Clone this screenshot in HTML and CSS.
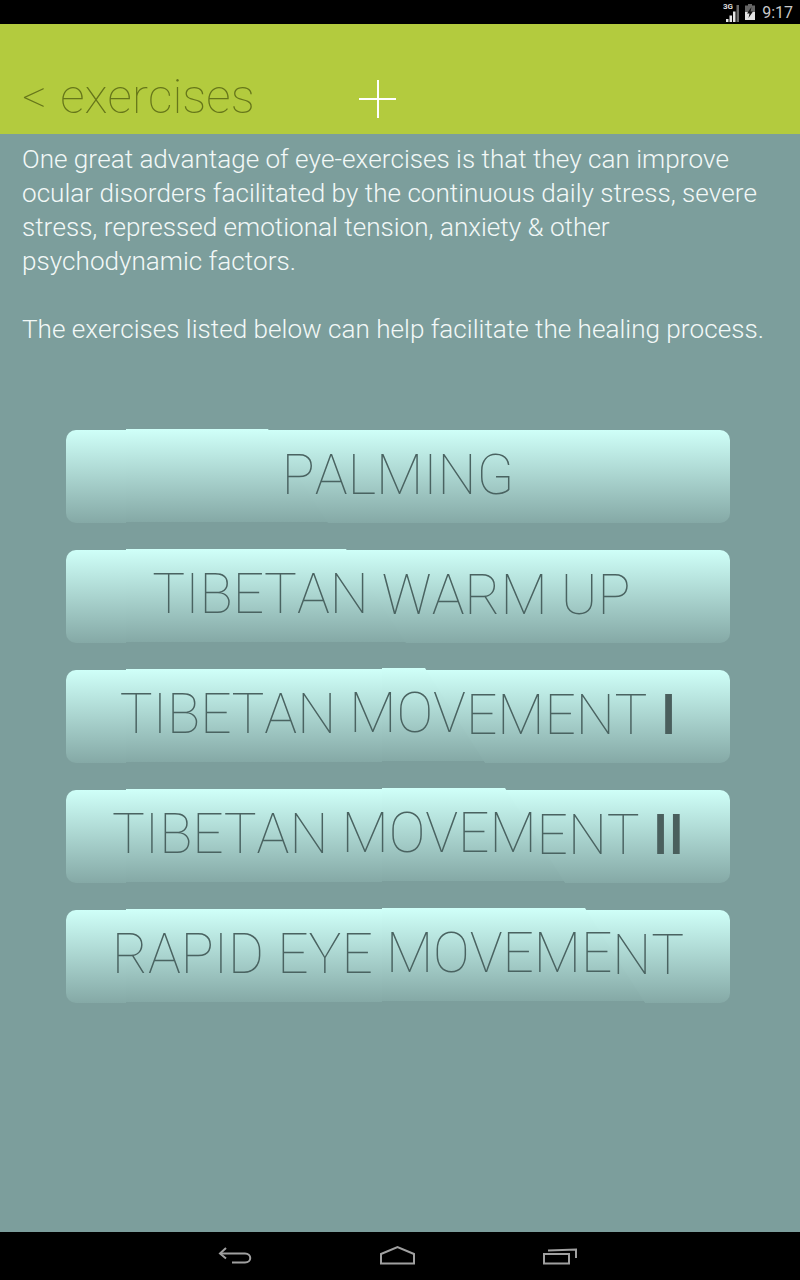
FILE: index.html
```html
<!DOCTYPE html>
<html lang="en">

<head>
    <meta charset="UTF-8">
    <meta name="viewport" content="width=device-width, initial-scale=1.0">
    <title>Exercises</title>
    <link rel="stylesheet" href="styles.css">
</head>

<body>
    <div id="status-bar">
        <svg class="signal" width="20" height="20" viewBox="0 0 20 20">
            <text x="3" y="7" class="signal-label">3G</text>
            <path d="M6 20h2.500v-3H6zM9.500 20H12v-6.500H9.500zM13 20h2.500V9.500H13z" fill="#e4e4e4" />
            <path d="M16.500 20H19V3h-2.500z" fill="#6a6a6a" />
        </svg>
        <svg class="battery" width="10" height="16" viewBox="0 0 10 16">
            <path d="M3 0h4v1.500h3V16H0V1.500h3z" fill="#666" />
            <path d="M0 8h10v8H0z" fill="#e4e4e4" />
            <path d="M6.500 3L2 9.500h2.500L3.500 14 8 7.500H5.500z" fill="#111" />
        </svg>
        <span class="clock">9:17</span>
    </div>

    <div id="header">
        <span class="title">&lt; exercises</span>
        <span class="plus"></span>
    </div>

    <div id="content">
        <p class="intro">One great advantage of eye-exercises is that they can improve ocular disorders facilitated by the continuous daily stress, severe stress, repressed emotional tension, anxiety &amp; other psychodynamic factors.</p>
        <p class="intro">The exercises listed below can help facilitate the healing process.</p>

        <div id="exercise-list">
            <div class="btn">
                <span class="tier tier-1 end-palming"></span>
                <span class="btn-label">PALMING</span>
            </div>
            <div class="btn">
                <span class="tier tier-1 end-warm"></span>
                <span class="btn-label"><span class="up-1">TIBETAN</span> WARM UP&nbsp;</span>
            </div>
            <div class="btn">
                <span class="tier tier-1 end-one-outer"></span>
                <span class="tier tier-2 end-one-inner"></span>
                <span class="btn-label"><span class="up-1">TIBETAN</span> <span class="up-2">MOV</span>EMENT <b>I</b></span>
            </div>
            <div class="btn">
                <span class="tier tier-1 end-two-outer"></span>
                <span class="tier tier-2 end-two-inner"></span>
                <span class="btn-label"><span class="up-1">TIBETAN</span> <span class="up-2">MOVEM</span>ENT <b>II</b></span>
            </div>
            <div class="btn">
                <span class="tier tier-1 end-rapid-outer"></span>
                <span class="tier tier-2 end-rapid-inner"></span>
                <span class="btn-label"><span class="up-1">RAPID EYE</span> <span class="up-2">MOVEME</span>NT</span>
            </div>
        </div>
    </div>

    <div id="nav-bar">
        <svg width="36" height="24" viewBox="0 0 36 24" fill="none" stroke="#a0a0a0" stroke-width="2">
            <path d="M8 4L2 9.500l6 5" />
            <path d="M2 9.500h25c7 0 7 9 0 9H14" />
        </svg>
        <svg width="36" height="24" viewBox="0 0 36 24" fill="none" stroke="#a0a0a0" stroke-width="2">
            <path d="M1 10L17.500 3 34 10v9.500H1z" />
        </svg>
        <svg width="36" height="24" viewBox="0 0 36 24" fill="none" stroke="#a0a0a0" stroke-width="2">
            <path d="M2 10h25v9.500H2z" />
            <path d="M6 6.500l28-1V14" />
        </svg>
    </div>
</body>

</html>
```

FILE: styles.css
```css
body, html {
    margin: 0;
    padding: 0;
    height: 100%;
    font-family: Roboto, sans-serif;
    font-kerning: none;
    background-color: #7c9e9c;
}

body {
    display: flex;
    flex-direction: column;
    height: 1280px;
    overflow: hidden;
}

#status-bar {
    height: 24px;
    background: #000;
    display: flex;
    justify-content: flex-end;
    align-items: center;
    gap: 5px;
    padding-right: 7px;
}

.signal-label {
    font-size: 8px;
    font-weight: 700;
    fill: #ddd;
}

.clock {
    color: #c8c8c8;
    font-size: 16px;
    margin-left: 2px;
}

#header {
    height: 110px;
    background: #b3cb3e;
    display: flex;
    align-items: flex-end;
    position: relative;
    padding-left: 22px;
    box-sizing: border-box;
}

.title {
    font-size: 48.200px;
    font-weight: 100;
    word-spacing: 2px;
    color: #66761a;
    line-height: 1;
    padding-bottom: 13px;
}

.plus {
    position: absolute;
    left: 359px;
    top: 56px;
    width: 37px;
    height: 38px;
    background:
        linear-gradient(#fff, #fff) center / 100% 2px no-repeat,
        linear-gradient(#fff, #fff) center / 2px 100% no-repeat;
}

#content {
    flex: 1;
    padding: 8px 22px 0;
}

.intro {
    margin: 0 0 34px;
    font-size: 26.100px;
    font-weight: 300;
    line-height: 34px;
    color: #f2f8f7;
}

#exercise-list {
    display: flex;
    flex-direction: column;
    gap: 27px;
    margin: 84px 48px 0 44px;
}

.btn {
    position: relative;
    height: 93px;
    border-radius: 10px;
    background: linear-gradient(#cffff8, #85a9a6);
    display: flex;
    justify-content: center;
}

/* slightly raised slices of the button, the right end runs on a slant */
.tier {
    position: absolute;
    clip-path: polygon(0 0, calc(100% - 60px) 0, 100% 100%, 0 100%);
}

.tier-1 {
    left: 60px;
    top: -1px;
    height: 94px;
    background: linear-gradient(#cffff8 1px, #85a9a6 93px, #7c9e9c 93px);
}

.tier-2 {
    left: 316px;
    top: -2px;
    height: 95px;
    background: linear-gradient(#cffff8 1px, #85a9a6 93px, #7c9e9c 93px);
}

.end-palming { width: 202px; }
.end-warm { width: 280px; }
.end-one-outer { width: 359px; }
.end-one-inner { width: 103px; }
.end-two-outer { width: 439px; }
.end-two-inner { width: 183px; }
.end-rapid-outer { width: 519px; }
.end-rapid-inner { width: 263px; }

.btn-label {
    position: relative;
    font-size: 55px;
    font-weight: 100;
    line-height: 90px;
    color: #4a6361;
    white-space: nowrap;
}

.btn-label b {
    font-weight: 500;
    color: #4a5f5d;
}

.up-1, .up-2 {
    display: inline-block;
}

.up-1 { transform: translateY(-1px); }
.up-2 { transform: translateY(-2px); }

#nav-bar {
    height: 48px;
    background: #000;
    display: flex;
    justify-content: center;
    align-items: center;
    gap: 126px;
    padding-right: 5px;
}
```
